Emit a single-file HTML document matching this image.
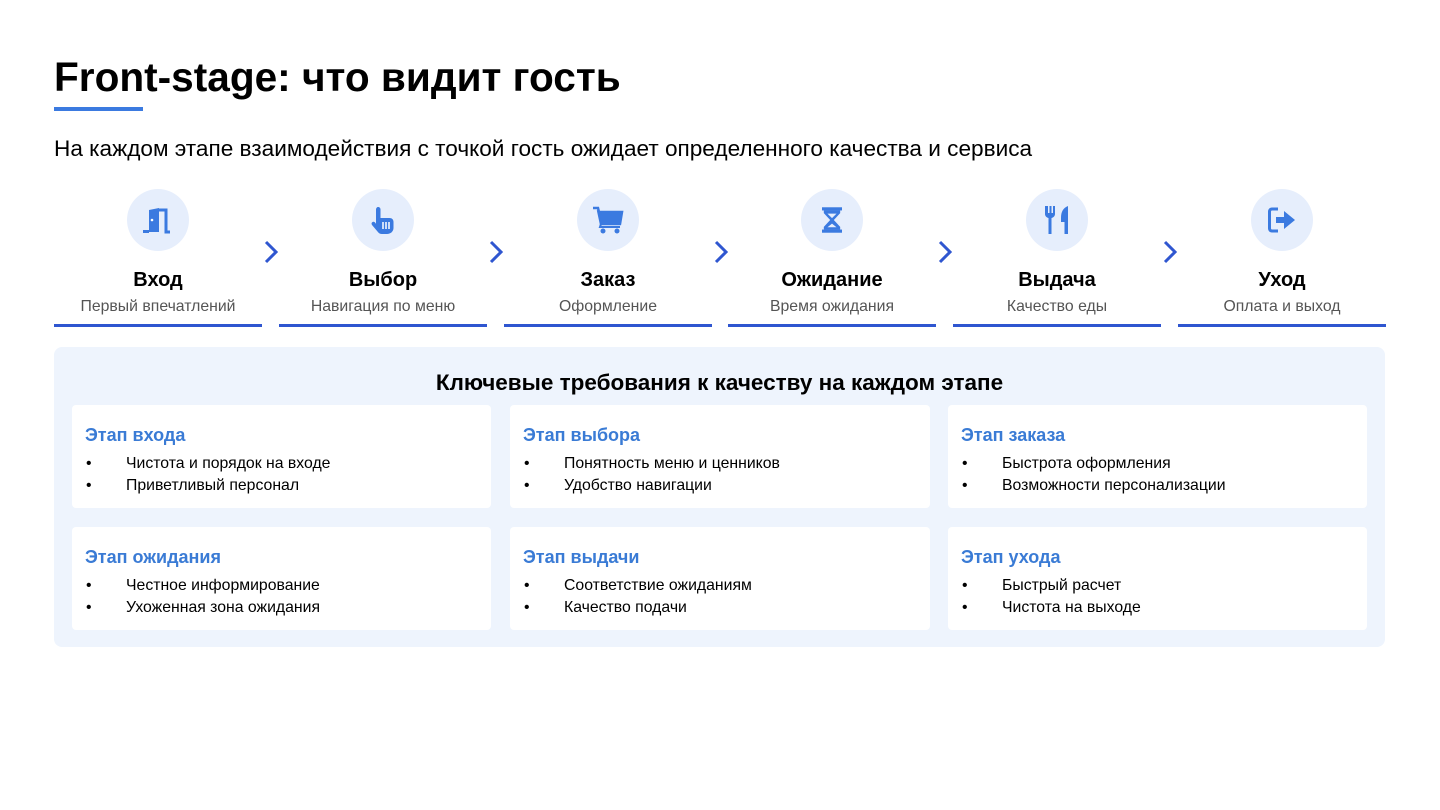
<!DOCTYPE html>
<html><head><meta charset="utf-8"><style>
*{margin:0;padding:0;box-sizing:border-box}
body{width:1440px;height:810px;background:#fff;font-family:"Liberation Sans","DejaVu Sans",sans-serif;position:relative;overflow:hidden;color:#000}
.a{position:absolute}
h1{position:absolute;left:54px;top:54px;font-size:40.6px;font-weight:bold;white-space:nowrap}
.ul{left:54px;top:107px;width:89px;height:4px;background:#3b7ae0}
.sub{left:54px;top:136px;font-size:22.6px;white-space:nowrap}
.col{position:absolute;top:189px;width:208px;text-align:center}
.circ{width:62px;height:62px;border-radius:50%;background:#e6eefc;margin:0 auto;display:flex;align-items:center;justify-content:center}
.t{margin-top:18px;font-size:20px;font-weight:bold;height:24px}
.s{margin-top:5px;font-size:15.8px;color:#555}
.bar{position:absolute;top:135px;left:0;width:208px;height:3px;background:#2f56d0}
.chev{position:absolute;top:240px}
.panel{left:54px;top:347px;width:1331px;height:300px;background:#eef4fd;border-radius:8px}
.ph{left:54px;width:1331px;top:370px;text-align:center;font-size:22.5px;font-weight:bold}
.card{position:absolute;background:#fff;border-radius:4px;width:419px;height:103px}
.card h3{position:absolute;left:13px;top:20px;font-size:18px;color:#3a7bd5;font-weight:bold}
.card p{position:absolute;left:54px;font-size:15.8px;white-space:nowrap}
.card p:before{content:"•";position:absolute;left:-40px}
</style></head><body>
<h1>Front-stage: что видит гость</h1>
<div class="a ul"></div>
<div class="a sub">На каждом этапе взаимодействия с точкой гость ожидает определенного качества и сервиса</div>

<div class="col" style="left:54px"><div class="circ"><svg width="32" height="28" viewBox="0 0 32 28"><path d="M3 26h14V2L7 4v22z" fill="#3b7ae0"/><path d="M17 4h7v22h4" fill="none" stroke="#3b7ae0" stroke-width="3"/><circle cx="10" cy="14" r="1.3" fill="#fff"/><rect x="1" y="24" width="6" height="3" fill="#3b7ae0"/></svg></div><div class="t">Вход</div><div class="s">Первый впечатлений</div><div class="bar"></div></div>
<div class="col" style="left:279px"><div class="circ"><svg width="26" height="30" viewBox="0 0 26 30"><path d="M8 2c1.5 0 2.5 1 2.5 2.5V13h9c2.5 0 4 1.5 4 4v6c0 3.5-3 6-6.5 6H12c-2 0-3.5-1-4.5-2.5L2 20c-.8-1.2-.5-2.5.7-3 1-.5 2 0 2.8 1L6 19V4.5C6 3 7 2 8 2z" fill="#3b7ae0"/><path d="M13 17v7M16 17v7M19 17v7" stroke="#fff" stroke-width="1.5"/></svg></div><div class="t">Выбор</div><div class="s">Навигация по меню</div><div class="bar"></div></div>
<div class="col" style="left:504px"><div class="circ"><svg width="32" height="28" viewBox="0 0 32 28"><path d="M1 2h5l1 4h23l-2 12H9L6 4" fill="none" stroke="#3b7ae0" stroke-width="2.5"/><path d="M7 6h23l-2 12H9z" fill="#3b7ae0"/><path d="M9 18l-1 3h20" fill="none" stroke="#3b7ae0" stroke-width="2"/><circle cx="11" cy="25" r="2.5" fill="#3b7ae0"/><circle cx="25" cy="25" r="2.5" fill="#3b7ae0"/></svg></div><div class="t">Заказ</div><div class="s">Оформление</div><div class="bar"></div></div>
<div class="col" style="left:728px"><div class="circ"><svg width="20" height="26" viewBox="0 0 22 28"><rect x="0" y="0" width="22" height="3.5" fill="#3b7ae0"/><rect x="0" y="24.5" width="22" height="3.5" fill="#3b7ae0"/><path d="M2 3.5h18v3L13 14l7 7.5v3H2v-3L9 14 2 6.5z" fill="#3b7ae0"/><path d="M6 7h10l-5 5z" fill="#e6eefc"/><path d="M6 22l5-4 5 4z" fill="#e6eefc"/></svg></div><div class="t">Ожидание</div><div class="s">Время ожидания</div><div class="bar"></div></div>
<div class="col" style="left:953px"><div class="circ"><svg width="26" height="30" viewBox="0 0 26 30"><path d="M1 1v8c0 2 1.5 3.5 3.5 4V29h3V13c2-.5 3.5-2 3.5-4V1H9v7H7.5V1h-2v7H4V1z" fill="#3b7ae0"/><path d="M24 1c-5 2-7 6-7 12v4h3.5v12H24z" fill="#3b7ae0"/></svg></div><div class="t">Выдача</div><div class="s">Качество еды</div><div class="bar"></div></div>
<div class="col" style="left:1178px"><div class="circ"><svg width="30" height="26" viewBox="0 0 30 26"><path d="M11 2H5C3.5 2 2.5 3 2.5 4.5v17C2.5 23 3.5 24 5 24h6" fill="none" stroke="#3b7ae0" stroke-width="3"/><path d="M9 10h8V4l11 9-11 9v-6H9z" fill="#3b7ae0"/></svg></div><div class="t">Уход</div><div class="s">Оплата и выход</div><div class="bar"></div></div>

<svg class="chev" style="left:263px" width="16" height="24" viewBox="0 0 16 24"><path d="M3 2l10 10-10 10" fill="none" stroke="#2f56d0" stroke-width="3"/></svg>
<svg class="chev" style="left:488px" width="16" height="24" viewBox="0 0 16 24"><path d="M3 2l10 10-10 10" fill="none" stroke="#2f56d0" stroke-width="3"/></svg>
<svg class="chev" style="left:713px" width="16" height="24" viewBox="0 0 16 24"><path d="M3 2l10 10-10 10" fill="none" stroke="#2f56d0" stroke-width="3"/></svg>
<svg class="chev" style="left:937px" width="16" height="24" viewBox="0 0 16 24"><path d="M3 2l10 10-10 10" fill="none" stroke="#2f56d0" stroke-width="3"/></svg>
<svg class="chev" style="left:1162px" width="16" height="24" viewBox="0 0 16 24"><path d="M3 2l10 10-10 10" fill="none" stroke="#2f56d0" stroke-width="3"/></svg>

<div class="a panel"></div>
<div class="a ph">Ключевые требования к качеству на каждом этапе</div>

<div class="card" style="left:72px;top:405px"><h3>Этап входа</h3><p style="top:50px">Чистота и порядок на входе</p><p style="top:72px">Приветливый персонал</p></div>
<div class="card" style="left:510px;top:405px;width:420px"><h3>Этап выбора</h3><p style="top:50px">Понятность меню и ценников</p><p style="top:72px">Удобство навигации</p></div>
<div class="card" style="left:948px;top:405px"><h3>Этап заказа</h3><p style="top:50px">Быстрота оформления</p><p style="top:72px">Возможности персонализации</p></div>
<div class="card" style="left:72px;top:527px"><h3>Этап ожидания</h3><p style="top:50px">Честное информирование</p><p style="top:72px">Ухоженная зона ожидания</p></div>
<div class="card" style="left:510px;top:527px;width:420px"><h3>Этап выдачи</h3><p style="top:50px">Соответствие ожиданиям</p><p style="top:72px">Качество подачи</p></div>
<div class="card" style="left:948px;top:527px"><h3>Этап ухода</h3><p style="top:50px">Быстрый расчет</p><p style="top:72px">Чистота на выходе</p></div>
</body></html>
